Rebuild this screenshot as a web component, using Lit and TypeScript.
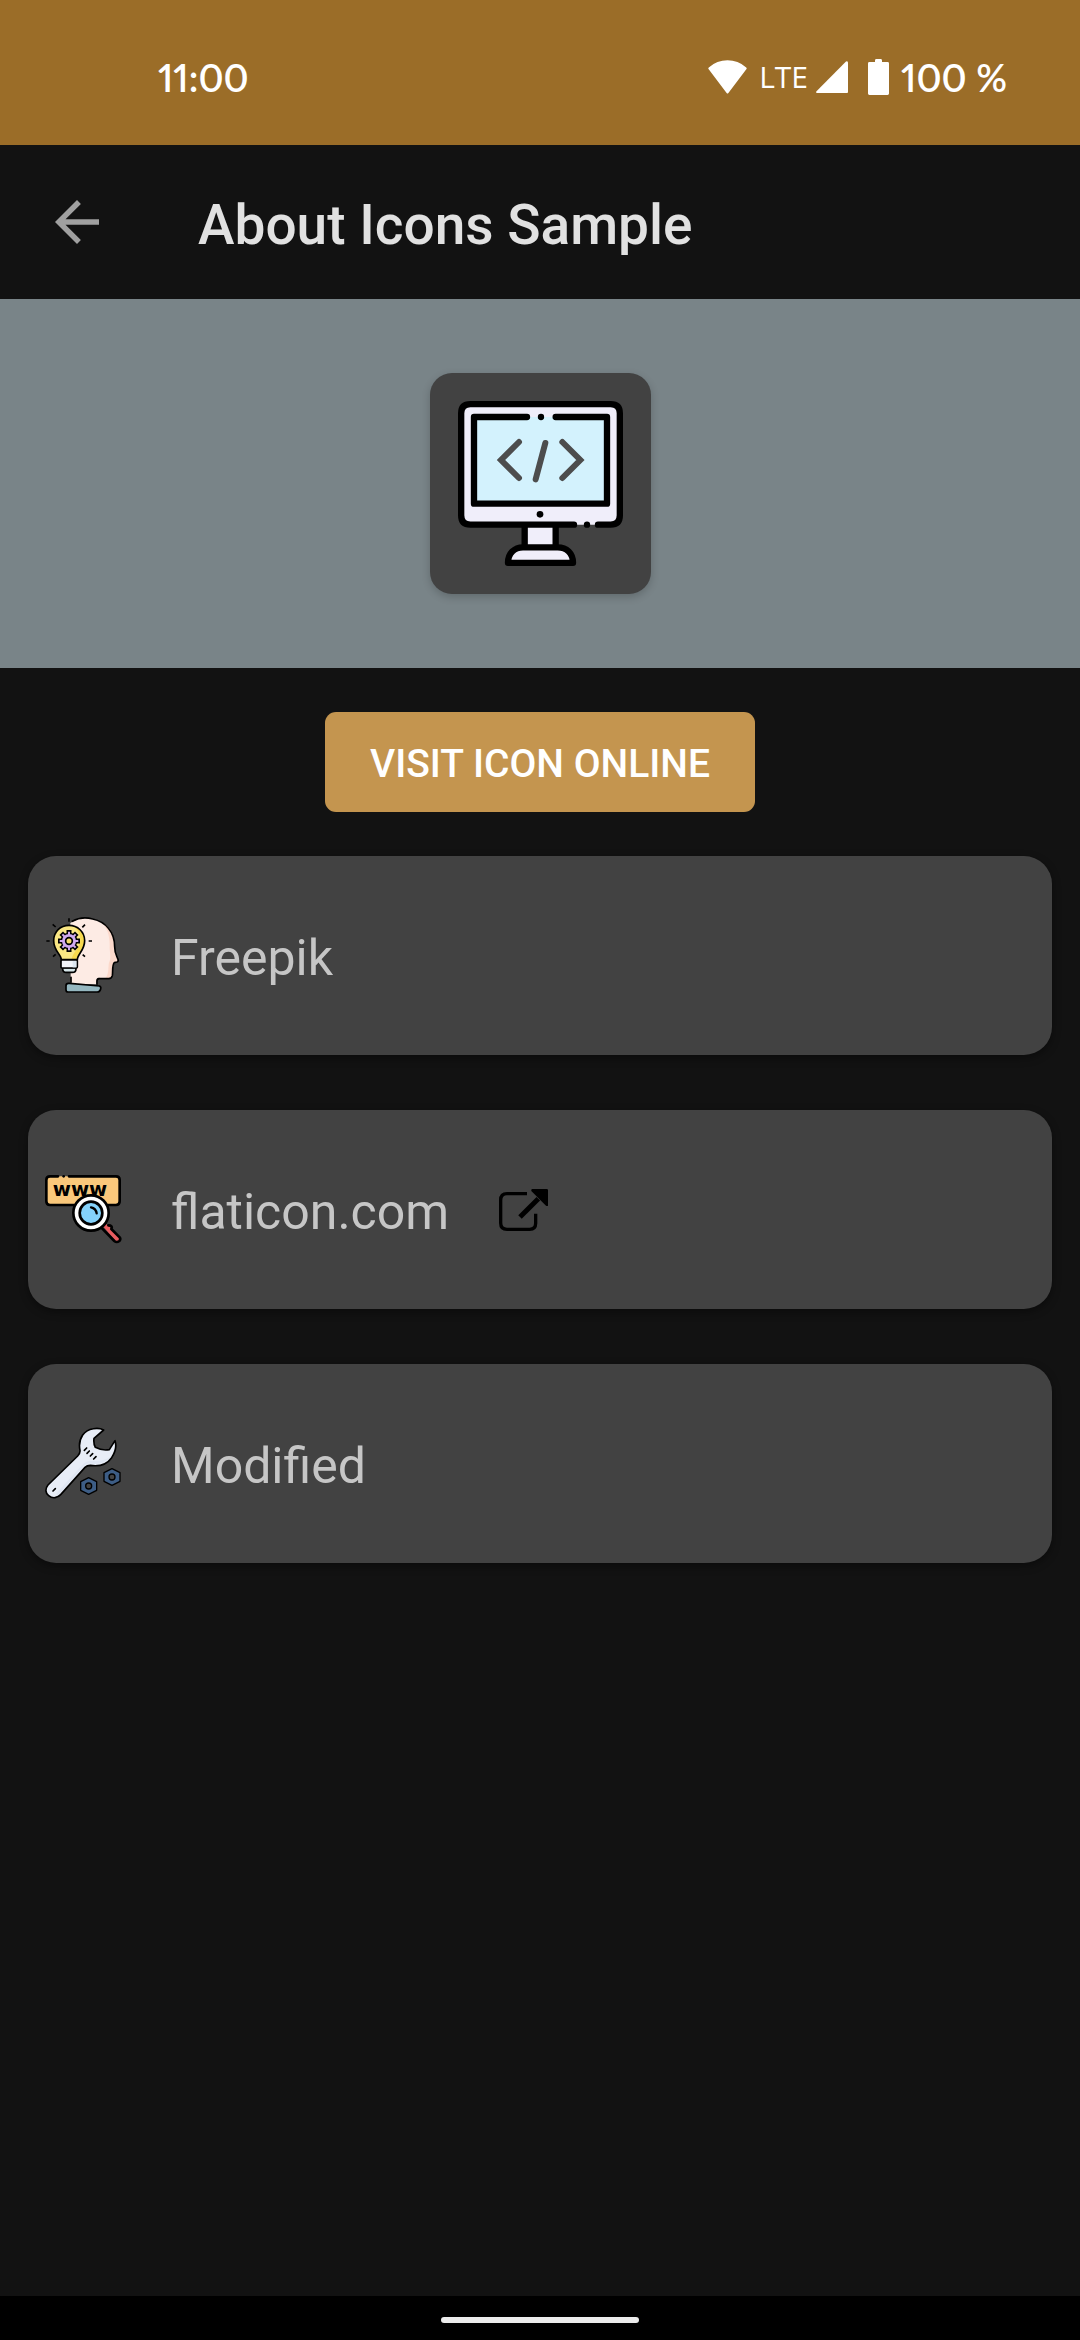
import { LitElement, html, css, svg } from "lit";
import { customElement } from "lit/decorators.js";

const backIcon = html`<svg class="back-icon" viewBox="0 0 24 24" aria-hidden="true">
  <path fill="currentColor" d="M20 11H7.83l5.59-5.59L12 4l-8 8 8 8 1.41-1.41L7.83 13H20v-2z" />
</svg>`;

const wifiIcon = html`<svg class="wifi" viewBox="0 0 39 34" aria-hidden="true">
  <path fill="#fff" d="M0.5 9 Q0 8.2 0.8 7.4 Q9 0.3 19.5 0.3 Q30 0.3 38.2 7.4 Q39 8.2 38.5 9 L20.4 33 Q19.5 34.2 18.6 33 Z" />
</svg>`;

const signalIcon = html`<svg class="signal" viewBox="0 0 32 32" aria-hidden="true">
  <path fill="#fff" d="M0.5 30.2 L30 0.6 Q32 -0.4 32 2 V31 Q32 32 31 32 H1 Q-0.6 31.6 0.5 30.2 Z" />
</svg>`;

const batteryIcon = html`<svg class="battery" viewBox="0 0 21 36" aria-hidden="true">
  <path fill="#fff" d="M7 3 V1.4 Q7 0 8.4 0 H12.6 Q14 0 14 1.4 V3 H19.6 Q21 3 21 4.4 V34.6 Q21 36 19.6 36 H1.4 Q0 36 0 34.6 V4.4 Q0 3 1.4 3 Z" />
</svg>`;

const monitorIcon = html`<svg class="hero-icon" viewBox="111 123 495 495" role="img" aria-label="Monitor with code">
  <rect x="310" y="490" width="95" height="75" fill="#f0eefa" />
  <rect x="120" y="132" width="477" height="362" rx="28" fill="#f0eefa" />
  <path d="M159 171 H558 V431 H159 Z" fill="#d3f2fd" />
  <path d="M261 609 C261 578 282 562 306 562 H410 C436 562 456 578 456 609 Z" fill="#f0eefa" />
  <g fill="none" stroke="#000" stroke-width="19" stroke-linecap="round" stroke-linejoin="round">
    <path d="M459 494 H148 Q120.500 494 120.500 466 V160 Q120.500 132.500 148 132.500 H569 Q596.500 132.500 596.500 160 V466 Q596.500 494 569 494 H531" />
    <path d="M318 171 H159 V431 H558 V171 H404" />
    <path d="M311 496 V556 M404 496 V556" stroke-linecap="butt" />
    <path d="M261 608.500 C261 580 280 562 306 562 H410 C437 562 456 580 456 608.500 Z" />
  </g>
  <g fill="#000">
    <circle cx="360" cy="171" r="9.500" />
    <circle cx="357" cy="463" r="10" />
    <circle cx="498" cy="494" r="9.500" />
  </g>
  <g fill="none" stroke="#4d4d4d" stroke-width="18" stroke-linecap="round">
    <path d="M294 246 L240 300 L294 354" />
    <path d="M424 246 L478 300 L424 354" />
    <path d="M373 249 L344 358" />
  </g>
</svg>`;

const gearTeeth = [0, 45, 90, 135, 180, 225, 270, 315];

const ideaIcon = html`<svg class="row-icon" viewBox="27 36 231 231" aria-hidden="true">
  <path d="M103 54 C124 39 148 35 170 42 C208 50 236 80 236 125 C236 144 241 150 246 163 Q248 169 243 171 L236 173 C229 180 231 200 229 212 Q227 222 216 221 L186 218 Q180 222 181 238 L104 236 V196 Z" fill="#fdebe4" />
  <path d="M196 52 C220 62 236 86 236 125 C236 144 241 150 246 163 Q248 169 243 171 L236 173 C229 180 231 200 229 212 Q227 222 216 221 L208 220 C222 205 214 180 221 168 C226 155 220 140 221 120 C221 90 213 68 196 52 Z" fill="#fcd9cb" />
  <path d="M109 49 C126 39 148 36 170 42 C208 50 236 80 236 125 C236 144 241 150 246 163 Q248 169 243 171 L235 173 C228 180 231 200 229 212 Q227 222 216 221 H190 Q183 221 183 228 V238 M105 217 V232" fill="none" stroke="#000" stroke-width="5" stroke-linecap="round" stroke-linejoin="round" />
  <path d="M97 235 H101 L190 243 Q196 245 194 252 Q192 261 184 261 H97 Q90 261 90 254 V242 Q90 235 97 235 Z" fill="#95b7c0" stroke="#000" stroke-width="5" stroke-linejoin="round" />
  <path d="M76 164 C76 148 53 138 53 107 C53 80 73 61 99 61 C125 61 146 81 146 107 C146 136 124 148 124 164 Z" fill="#fae784" />
  <path d="M112 63 C132 68 146 86 146 107 C146 136 124 148 124 164 H107 C107 145 133 130 133 105 C133 88 125 73 112 63 Z" fill="#f7d94e" />
  <path d="M76 164 C76 148 53 138 53 107 C53 80 73 61 99 61 C125 61 146 81 146 107 C146 136 124 148 124 164 Z" fill="none" stroke="#000" stroke-width="5" />
  <path d="M80 188 H120 V191 Q120 202 109 202 H91 Q80 202 80 191 Z" fill="#d5e5e8" stroke="#000" stroke-width="5" />
  <rect x="75" y="165" width="49" height="24" rx="3" fill="#f1f3f8" stroke="#000" stroke-width="5" />
  <path d="M110 168 H121 V187 H110 Z" fill="#dce6ef" />
  <g stroke="#000">
    ${gearTeeth.map((a) => svg`<path d="M99 75 V88" stroke-width="15" transform="rotate(${a} 99 108)" />`)}
  </g>
  <circle cx="99" cy="108" r="25" fill="#000" />
  <g stroke="#d1aaf0" stroke-width="6">
    ${gearTeeth.map((a) => svg`<path d="M99 80 V93" transform="rotate(${a} 99 108)" />`)}
  </g>
  <circle cx="99" cy="108" r="21" fill="#d1aaf0" />
  <circle cx="99" cy="108" r="10" fill="#f7dc6a" stroke="#000" stroke-width="5" />
  <path d="M99 40 V50 M50 58 L59 66 M147 59 L139 67 M31 108 H41 M158 108 H168 M51 155 L59 148 M140 149 L147 155" stroke="#000" stroke-width="5" />
</svg>`;

const webIcon = html`<svg class="row-icon" viewBox="27 33 231 231" aria-hidden="true">
  <rect x="31" y="49" width="220" height="86" rx="10" fill="#fac87b" />
  <path d="M66 49 H42 Q31 49 31 60 V124 Q31 135 42 135 H240 Q251 135 251 124 V60 Q251 49 240 49 H99" fill="none" stroke="#000" stroke-width="8" stroke-linecap="round" />
  <circle cx="83" cy="49" r="4" fill="#000" />
  <text class="www" x="132" y="108" text-anchor="middle">www</text>
  <path d="M202 200 L212 192 L253 232 Q257 244 242 247 Z" fill="#e95c60" />
  <path d="M217 196 Q231 196 226 207 L251 232 Q255 238 250 243 Q242 249 235 243 L199 206" fill="none" stroke="#000" stroke-width="8" stroke-linecap="round" stroke-linejoin="round" />
  <circle cx="165" cy="159" r="53" fill="#fff" stroke="#000" stroke-width="8" />
  <circle cx="165" cy="159" r="34" fill="#84d2fc" stroke="#000" stroke-width="8" />
  <path d="M165 142 Q180 145 182 160" fill="none" stroke="#000" stroke-width="7" stroke-linecap="round" />
</svg>`;

const nut = (x: number, y: number) => svg`<g transform="translate(${x} ${y})">
  <path d="M0 -25 L24 -13 V13 L0 25 L-24 13 V-13 Z" fill="#3d5d85" stroke="#000" stroke-width="4" stroke-linejoin="round" />
  <circle r="9" fill="#434343" stroke="#000" stroke-width="4" />
</g>`;

const wrenchIcon = html`<svg class="row-icon" viewBox="27 30 231 231" aria-hidden="true">
  <path d="M203 45 C188 37 156 38 140 60 C130 75 129 92 132 106 Q133 114 125 123 L36 210 C27 221 28 235 38 242 C50 252 65 249 74 239 L147 157 Q153 151 163 151 C190 155 213 148 227 128 C240 108 242 92 237 77 L220 104 Q199 108 178 97 Q172 86 174 70 Z" fill="#e8edf7" stroke="#000" stroke-width="5" stroke-linejoin="round" />
  <path d="M160 145 C190 149 210 142 223 125 C207 136 186 140 163 137 Q148 139 139 150 L64 232 Q58 240 66 241 L143 154 Q150 146 160 145 Z" fill="#dfe6f3" />
  <path d="M145 106 L152 99 M153 115 L160 108 M163 123 L170 116 M173 132 L180 125 M51 228 L58 221" stroke="#000" stroke-width="5" stroke-linecap="round" />
  ${nut(158, 213)} ${nut(228, 186)}
</svg>`;

const externalIcon = html`<svg class="external" viewBox="0 0 147 126" aria-hidden="true">
  <path d="M84 14 H24 Q5 14 5 33 V102 Q5 121 24 121 H92 Q110 121 110 103 V74" fill="none" stroke="#000" stroke-width="10" />
  <path d="M63 84 L118 29" stroke="#000" stroke-width="15" />
  <path d="M99 0 H143 Q147 0 147 4 V50 Q144 52 141 50 L97 6 Q96 2 99 0 Z" fill="#000" />
</svg>`;

interface Credit {
  icon: unknown;
  label: string;
  href?: string;
}

const credits: Credit[] = [
  { icon: ideaIcon, label: "Freepik" },
  { icon: webIcon, label: "flaticon.com", href: "https://www.flaticon.com" },
  { icon: wrenchIcon, label: "Modified" },
];

@customElement("app-root")
export class AppRoot extends LitElement {
  static styles = css`
    :host {
      display: flex;
      flex-direction: column;
      min-height: 100vh;
      background: #121212;
      font-family: Roboto, "Liberation Sans", sans-serif;
    }
    svg {
      display: block;
      flex: none;
    }
    .status {
      display: flex;
      align-items: center;
      justify-content: space-between;
      box-sizing: border-box;
      height: 145px;
      padding: 8px 73px 0 158px;
      background: #9b6d28;
      color: #fff;
      font: 600 38px/48px Lato, sans-serif;
      font-variant-numeric: proportional-nums;
    }
    .indicators {
      display: flex;
      align-items: center;
    }
    .wifi {
      width: 39px;
      height: 34px;
    }
    .lte {
      margin: 0 8px 0 12px;
      font: 400 30px/48px "Open Sans", sans-serif;
    }
    .signal {
      width: 32px;
      height: 32px;
    }
    .battery {
      width: 21px;
      height: 36px;
      margin: 0 12px 0 20px;
    }
    .appbar {
      display: flex;
      align-items: center;
      gap: 88px;
      height: 154px;
      padding: 0 44px;
    }
    .back {
      padding: 0;
      border: 0;
      background: none;
      color: #a0a0a0;
    }
    .back-icon {
      width: 66px;
      height: 66px;
    }
    .title {
      margin: 0;
      padding-top: 6px;
      color: #e1e1e1;
      font-size: 55px;
      font-weight: 500;
      line-height: 64px;
    }
    .hero {
      display: flex;
      justify-content: center;
      padding: 74px 0;
      background: #798488;
    }
    .tile {
      padding: 28px;
      border-radius: 22px;
      background: #424242;
      box-shadow: 0 3px 8px rgba(0, 0, 0, 0.2);
    }
    .hero-icon {
      width: 165px;
      height: 165px;
    }
    .content {
      display: flex;
      flex: 1;
      flex-direction: column;
      align-items: center;
      gap: 44px;
      padding: 44px 28px;
    }
    .visit {
      height: 100px;
      padding: 4px 45px 0;
      border: 0;
      border-radius: 11px;
      background: #c4954f;
      color: #fff;
      font: 500 39px/48px Roboto, "Liberation Sans", sans-serif;
      text-transform: uppercase;
    }
    .credits {
      display: flex;
      flex-direction: column;
      gap: 55px;
      align-self: stretch;
      margin: 0;
      padding: 0;
      list-style: none;
    }
    .card {
      display: flex;
      align-items: center;
      gap: 49px;
      height: 199px;
      padding: 0 17px;
      border-radius: 28px;
      background: #424242;
      box-shadow: 0 3px 8px rgba(0, 0, 0, 0.4);
      color: #c6c6c6;
      font-size: 50px;
      line-height: 60px;
    }
    .label {
      padding-top: 4px;
    }
    .link {
      display: flex;
      align-items: center;
      gap: 50px;
      color: inherit;
      text-decoration: none;
    }
    .row-icon {
      width: 77px;
      height: 77px;
    }
    .external {
      width: 49px;
      height: 42px;
    }
    .www {
      font: 700 59px "DejaVu Sans", sans-serif;
    }
    .navbar {
      display: flex;
      align-items: center;
      justify-content: center;
      box-sizing: border-box;
      height: 44px;
      padding-top: 4px;
      background: #000;
    }
    .pill {
      width: 198px;
      height: 6px;
      border-radius: 3px;
      background: #ebebeb;
    }
  `;

  private renderCredit(c: Credit) {
    const label = html`<span class="label">${c.label}</span>`;
    return html`<li class="card">
      ${c.icon} ${c.href ? html`<a class="link" href=${c.href}>${label}${externalIcon}</a>` : label}
    </li>`;
  }

  render() {
    return html`
      <div class="status">
        <span>11:00</span>
        <div class="indicators">
          ${wifiIcon}<span class="lte">LTE</span>${signalIcon}${batteryIcon}<span>100 %</span>
        </div>
      </div>
      <header class="appbar">
        <button class="back" type="button" aria-label="Back">${backIcon}</button>
        <h1 class="title">About Icons Sample</h1>
      </header>
      <section class="hero"><div class="tile">${monitorIcon}</div></section>
      <main class="content">
        <button class="visit" type="button">Visit icon online</button>
        <ul class="credits">
          ${credits.map((c) => this.renderCredit(c))}
        </ul>
      </main>
      <div class="navbar"><div class="pill"></div></div>
    `;
  }
}
